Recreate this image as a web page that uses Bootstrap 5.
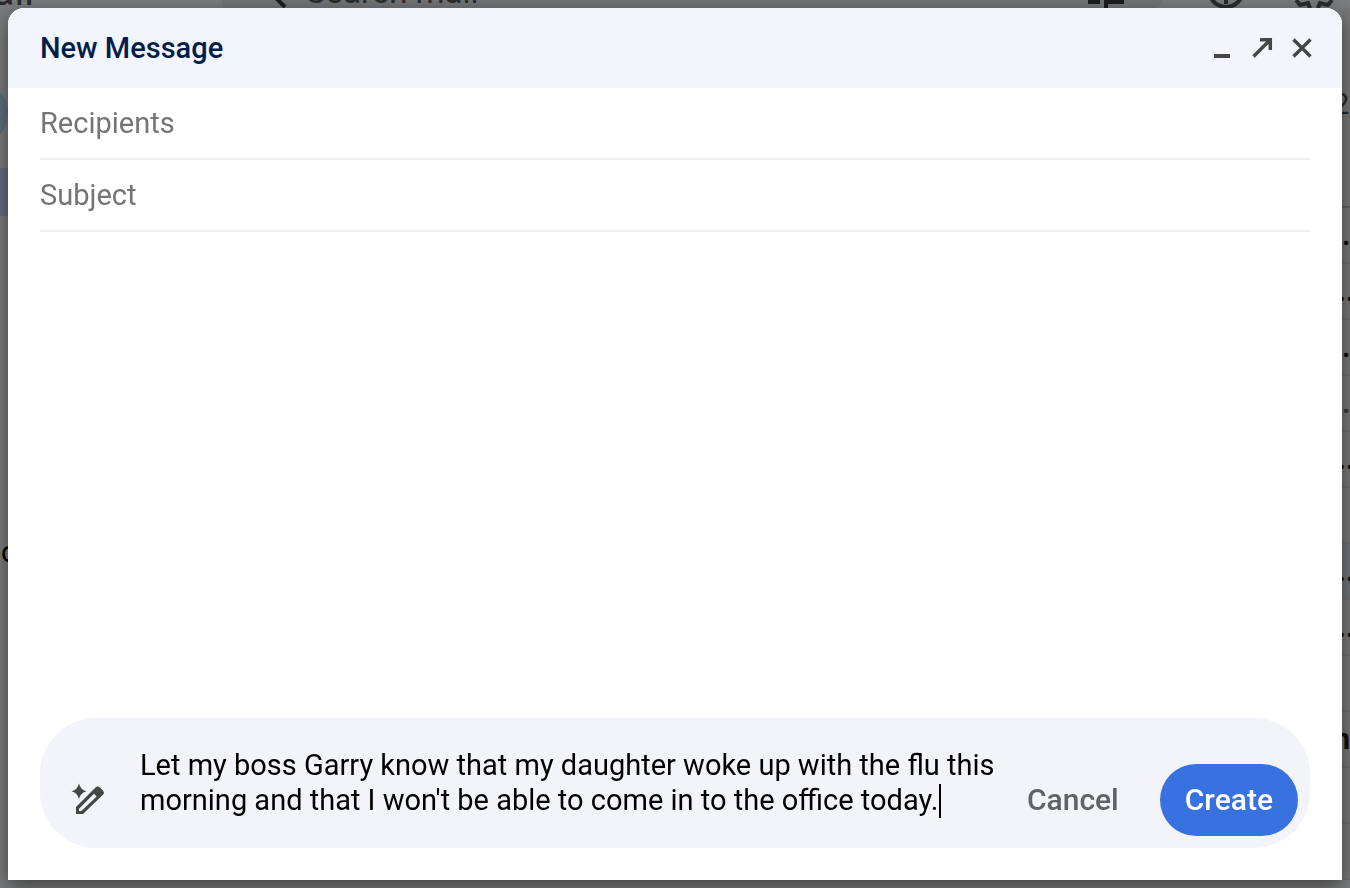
<!DOCTYPE html>
<html lang="en">
<head>
<meta charset="utf-8">
<meta name="viewport" content="width=device-width, initial-scale=1">
<title>New Message</title>
<link href="https://cdn.jsdelivr.net/npm/bootstrap@5.3.0/dist/css/bootstrap.min.css" rel="stylesheet">
<style>
  body { font-family: Roboto, "Liberation Sans", sans-serif; font-size: 29px; background: #747576; color: #000; }

  /* Dimmed mailbox behind the composer */
  .mailbox { background: #7b7c7d; color: #2b2c2d; }
  .topbar { height: 8px; line-height: 32px; }
  .brand-name { width: 34px; margin-right: 188px; font-size: 40px; }
  .searchbar { width: 940px; padding: 0 38px 0 48px; gap: 16px; background: #737477; border-bottom-left-radius: 4px; border-bottom-right-radius: 8px; font-size: 33px; }
  .tools { gap: 48px; padding-left: 44px; }
  .side { width: 8px; }
  .avatar-peek { width: 66px; height: 66px; margin: 72px 0 22px -58px; background: #5f717b; }
  .folder-peek { height: 48px; background: #696c82; margin-bottom: 322px; }
  .nav-peek { width: 12px; margin-left: 1px; }
  .list-head { height: 200px; padding: 78px 4px 0 0; background: #787878; line-height: 36px; border-bottom: 2px solid #626262; }
  .mail-row { height: 56px; line-height: 55px; border-bottom: 2px solid #707070; color: #111; background: #787878; font-weight: 700; }
  .mail-row.is-tinted { background: #6f7379; }
  .mail-row.is-read { color: #3c3c3c; }

  /* Composer window */
  .composer { inset: 8px; border-radius: 16px 16px 0 0; box-shadow: 0 6px 20px rgba(0,0,0,.5); }
  .composer-head { height: 80px; padding: 0 20px 0 32px; background: #f2f6fc; }
  .composer-title { font-size: 29px; font-weight: 500; line-height: 36px; color: #041e49; }
  .tool-btn { width: 40px; height: 40px; color: #444746; }
  .composer-fields { padding: 0 32px; }
  .field { height: 72px; padding: 0; border-bottom: 2px solid #eee; font-size: 29px; color: #222; }
  .field::placeholder { color: #757575; opacity: 1; }
  .field:focus { outline: 0; }
  .prompt-area { padding: 0 32px 32px; }
  .prompt { min-height: 130px; padding: 12px; border-radius: 56px; background: #f3f4fa; }
  .prompt-icon { margin: 0 34px 18px 18px; color: #444746; }
  .prompt-body { margin-bottom: 18px; }
  .prompt-text { height: 70px; line-height: 35px; font-size: 29px; color: #000; resize: none; }
  .prompt-text:focus { outline: 0; }
  .caret { left: 799px; bottom: 0; width: 2px; height: 34px; background: #000; }
  .pill { height: 72px; border: 0; border-radius: 36px; font-size: 30px; font-weight: 500; line-height: 36px; }
  .pill-quiet { padding: 0 25px; color: #5f6368; }
  .pill-main, .pill-main:hover { padding: 0 25px; color: #fff; background: #3871e0; }
</style>
</head>
<body class="vh-100 overflow-hidden">

<div class="mailbox vh-100 d-flex flex-column overflow-hidden" aria-hidden="true">
  <div class="topbar d-flex flex-shrink-0 align-items-end overflow-hidden">
    <div class="brand-name d-flex justify-content-end flex-shrink-0">Gmail</div>
    <div class="searchbar d-flex align-items-end flex-shrink-0">
      <svg width="20" height="24" viewBox="0 0 20 24" fill="none" stroke="#1d1d1d" stroke-width="4"><path d="M2 10l13 13"/></svg>
      <span>Search mail</span>
      <svg class="ms-auto" width="36" height="8" viewBox="0 0 36 8" fill="#1d1d1d"><path d="M0 0h12v4H0zM16 0h20v4H20v4h-4z"/></svg>
    </div>
    <div class="tools d-flex align-items-end">
      <svg width="40" height="40" viewBox="0 0 40 40" fill="none" stroke="#2b2c2d" stroke-width="4"><circle cx="20" cy="22" r="17"/><path d="M20 16v20"/></svg>
      <svg width="40" height="8" viewBox="0 0 40 8" fill="none" stroke="#2b2c2d" stroke-width="4"><path d="M2 0l4 5 8-2 2 5M38 0l-4 5-8-2-2 5"/></svg>
    </div>
  </div>
  <div class="d-flex flex-fill justify-content-between overflow-hidden">
    <div class="side overflow-hidden">
      <div class="avatar-peek rounded-circle"></div>
      <div class="folder-peek"></div>
      <div class="nav-peek text-black lh-1">o</div>
    </div>
    <div class="side overflow-hidden text-nowrap">
      <div class="list-head d-flex justify-content-center">2,</div>
      <div class="mail-row">.</div>
      <div class="mail-row d-flex justify-content-center">..</div>
      <div class="mail-row">.</div>
      <div class="mail-row is-read">.</div>
      <div class="mail-row d-flex justify-content-center">..</div>
      <div class="mail-row"></div>
      <div class="mail-row is-tinted d-flex justify-content-center">..</div>
      <div class="mail-row d-flex justify-content-center">..</div>
      <div class="mail-row"></div>
      <div class="mail-row d-flex justify-content-end">n</div>
      <div class="mail-row"></div>
      <div class="mail-row"></div>
    </div>
  </div>
</div>

<form class="composer position-fixed d-flex flex-column bg-white overflow-hidden" onsubmit="return false">
  <header class="composer-head d-flex align-items-center flex-shrink-0">
    <h1 class="composer-title m-0 me-auto">New Message</h1>
    <button type="button" class="tool-btn btn border-0 p-0 d-flex align-items-center justify-content-center" aria-label="Minimize">
      <svg width="24" height="24" viewBox="0 0 24 24" fill="currentColor"><path d="M4 18h16v4H4z"/></svg>
    </button>
    <button type="button" class="tool-btn btn border-0 p-0 d-flex align-items-center justify-content-center" aria-label="Full screen">
      <svg width="24" height="24" viewBox="0 0 24 24" fill="none" stroke="currentColor" stroke-width="3.500"><path d="M3.500 20.500L20 4M10 3.700h10.300V14"/></svg>
    </button>
    <button type="button" class="tool-btn btn border-0 p-0 d-flex align-items-center justify-content-center" aria-label="Close">
      <svg width="24" height="24" viewBox="0 0 24 24" fill="none" stroke="currentColor" stroke-width="3.300"><path d="M3.500 3.500l17 17M20.500 3.500l-17 17"/></svg>
    </button>
  </header>

  <div class="composer-fields d-flex flex-column">
    <input class="field border-top-0 border-start-0 border-end-0 w-100" type="text" placeholder="Recipients" aria-label="Recipients">
    <input class="field border-top-0 border-start-0 border-end-0 w-100" type="text" placeholder="Subject" aria-label="Subject">
  </div>

  <div class="prompt-area mt-auto">
    <div class="prompt d-flex align-items-end">
      <svg class="prompt-icon flex-shrink-0" width="36" height="36" viewBox="0 0 36 36" fill="currentColor" aria-hidden="true">
        <path d="M9 1.500q1.500 6.200 7.500 7.800Q10.500 10.800 9 17 7.500 10.800 1.500 9.300 7.500 7.700 9 1.500z"/>
        <path fill-rule="evenodd" d="M6 32v-7L25.500 5.500q2.200-2 4.400 0L33 8.600q1.800 2.100 0 4.100L13 32zM9 29.100h2.400L26.600 14.400 24 11.800 9 26.800z"/>
      </svg>
      <div class="prompt-body position-relative flex-fill d-flex">
        <textarea class="prompt-text w-100 border-0 p-0 bg-transparent overflow-hidden" rows="2" aria-label="Describe your email">Let my boss Garry know that my daughter woke up with the flu this morning and that I won't be able to come in to the office today.</textarea>
        <span class="caret position-absolute"></span>
      </div>
      <button type="button" class="pill pill-quiet btn">Cancel</button>
      <button type="submit" class="pill pill-main btn ms-3">Create</button>
    </div>
  </div>
</form>

<script src="https://cdn.jsdelivr.net/npm/bootstrap@5.3.0/dist/js/bootstrap.bundle.min.js"></script>
</body>
</html>
